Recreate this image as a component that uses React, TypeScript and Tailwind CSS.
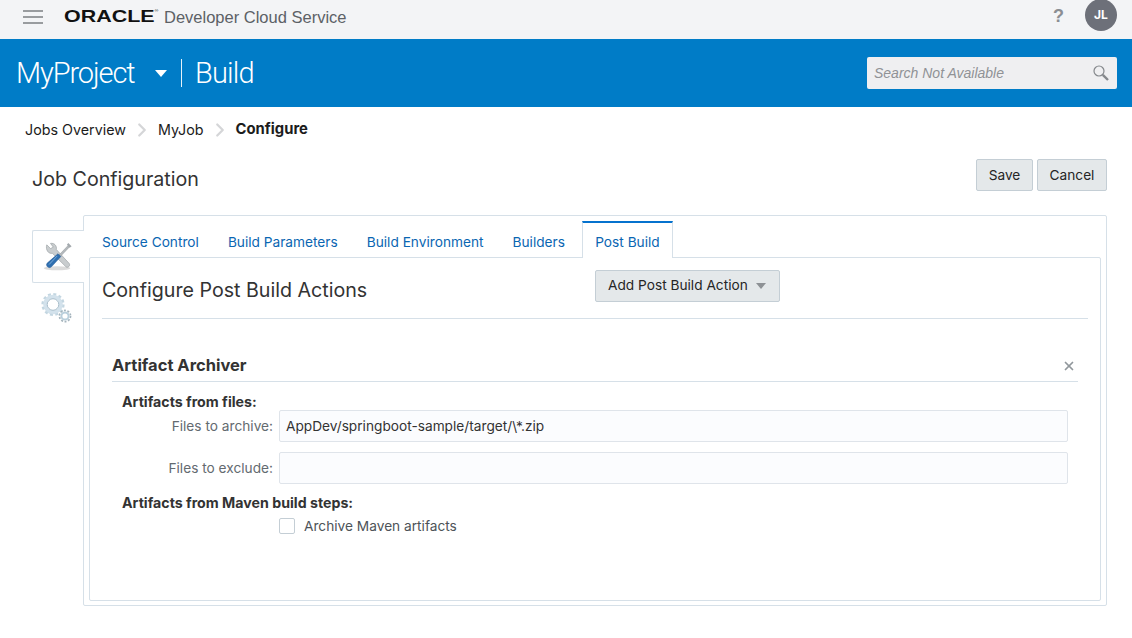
import React from 'react';
import { ChevronRight, X } from 'lucide-react';

const ToolsIcon = () => (
  <svg width="30" height="30" viewBox="0 0 32 32">
    <ellipse cx="15" cy="28" rx="14" ry="2.2" fill="#d2d2d2" opacity="0.8" />
    {/* wrench */}
    <path d="M4 3 L8 7 L11 5.5 L8 1.5 C12 0.8 15 4 14.2 8 L28 23 C29.5 25.5 26.5 28 24.5 26.5 L10 12 C6 13 2.5 8.5 4 3 Z" fill="#c9cdcf" stroke="#9aa0a4" strokeWidth="0.7" />
    {/* screwdriver shaft */}
    <path d="M27 3.5 L28.5 5 L17 17 L15.5 15.5 Z" fill="#b5babd" stroke="#8c9296" strokeWidth="0.5" />
    <path d="M27 1 L30.5 4.5 L28.5 6.2 L25.5 3 Z" fill="#a3a9ad" />
    {/* blue handle */}
    <path d="M16 12.5 L19 15.5 L9 26.5 C6.5 29 2 25.5 4.5 22.5 Z" fill="#2f6fb0" stroke="#1f5490" strokeWidth="0.5" />
    <path d="M15 15 L6.5 24" stroke="#7fb0dc" strokeWidth="1" />
  </svg>
);

const GearsIcon = () => (
  <svg width="32" height="32" viewBox="0 0 32 32" fill="none">
    <circle cx="12" cy="12.5" r="8" stroke="#d3e2ec" strokeWidth="3.6" />
    <circle cx="12" cy="12.5" r="10.5" stroke="#c3d6e1" strokeWidth="2.2" strokeDasharray="3 2.5" />
    <circle cx="12" cy="12.5" r="5.8" stroke="#8ea9bb" strokeWidth="0.8" />
    <circle cx="24" cy="24" r="3.6" stroke="#b9cfdc" strokeWidth="2" fill="#fff" />
    <circle cx="24" cy="24" r="5.6" stroke="#a5b4bd" strokeWidth="1.6" strokeDasharray="2 1.52" />
  </svg>
);

const SearchGlyph = () => (
  <svg width="18" height="18" viewBox="0 0 18 18" fill="none" className="ml-auto">
    <circle cx="7" cy="7" r="5" stroke="#85888c" strokeWidth="1.2" />
    <path d="M10.8 10.8 L16 16" stroke="#85888c" strokeWidth="2.4" />
  </svg>
);

const tabs = ['Source Control', 'Build Parameters', 'Build Environment', 'Builders'];

export default function App() {
  return (
    <div className='w-[1132px] h-[638px] overflow-hidden bg-white text-[13.7px] text-[#252525] font-["Inter","Liberation_Sans",sans-serif]'>
      {/* Top bar */}
      <header className="h-[39px] bg-[#f3f4f6] flex items-center pl-[23px] pr-[15px]">
        <div className="w-[20px] flex flex-col gap-[4px] mr-[21px] -mt-[5px]">
          <span className="h-[2px] bg-[#999c9f]" />
          <span className="h-[2px] bg-[#999c9f]" />
          <span className="h-[2px] bg-[#999c9f]" />
        </div>
        <span className='relative -mt-[6px] font-["Liberation_Sans",sans-serif] font-bold text-[16.5px] text-[#111] w-[93px] scale-x-[1.3] origin-left leading-none whitespace-nowrap'>ORACLE<span className="absolute top-[1px] text-[4px] font-normal">®</span></span>
        <span className='ml-[7px] -mt-[5px] font-["Liberation_Sans",sans-serif] text-[16.5px] text-[#5c6166] whitespace-nowrap'>Developer Cloud Service</span>
        <span className='ml-auto mr-[21px] -mt-[6px] font-["Liberation_Sans",sans-serif] font-bold text-[18px] text-[#8b8e93]'>?</span>
        <div className="w-[32px] h-[32px] -mt-[9px] rounded-full bg-[#6d7079] text-white text-[12px] font-bold flex items-center justify-center">JL</div>
      </header>

      {/* Blue band */}
      <div className="h-[68px] bg-[#007cc7] flex items-center pl-[16px] pr-[15px] text-white">
        <span className='font-["Roboto",sans-serif] text-[29px] font-light tracking-[-1.1px] leading-none whitespace-nowrap w-[119px]'>MyProject</span>
        <span className="ml-[20px] w-0 h-0 border-x-[6px] border-x-transparent border-t-[7px] border-t-white" />
        <span className="ml-[14px] w-px h-[28px] bg-white/90" />
        <span className='ml-[13px] font-["Roboto",sans-serif] font-light text-[29px] tracking-[-0.8px] leading-none'>Build</span>
        <div className="ml-auto w-[250px] h-[32px] bg-[#efeff1] rounded-[2px] flex items-center pl-[7px] pr-[7px]">
          <span className='font-["Liberation_Sans",sans-serif] italic text-[14px] text-[#909296]'>Search Not Available</span>
          <SearchGlyph />
        </div>
      </div>

      {/* Breadcrumbs */}
      <nav className="h-[45px] flex items-center pl-[25px] text-[14.3px] text-[#1c1c1c]">
        <span>Jobs Overview</span>
        <ChevronRight className="mx-[5px] w-[22px] h-[22px] text-[#d5d6d8]" strokeWidth={2.5} />
        <span>MyJob</span>
        <ChevronRight className="mx-[5px] w-[22px] h-[22px] text-[#d5d6d8]" strokeWidth={2.5} />
        <span className="font-bold text-[14.8px]">Configure</span>
      </nav>

      {/* Title row */}
      <div className="h-[63px] pt-[7px] pl-[32px] pr-[25px] flex items-start">
        <h1 className="mt-[6px] text-[19.65px] font-normal text-[#333]">Job Configuration</h1>
        <div className="ml-auto flex gap-[4px]">
          <button className="h-[32px] w-[57px] bg-[#e4e8ea] border border-[#c4ced5] rounded-[2px]">Save</button>
          <button className="h-[32px] w-[70px] bg-[#e4e8ea] border border-[#c4ced5] rounded-[2px]">Cancel</button>
        </div>
      </div>

      <div className="flex items-start pl-[32px]">
        {/* Side tabs */}
        <div className="mt-[15px] w-[51px] shrink-0">
          <div className="h-[53px] w-[52px] relative z-10 bg-white border border-r-0 border-[#d6e0e8] rounded-l-[2px] flex items-center justify-center pt-[1px] pr-[2px]">
            <ToolsIcon />
          </div>
          <div className="mt-[9px] flex justify-center pr-[1px]">
            <GearsIcon />
          </div>
        </div>

        {/* Outer panel */}
        <div className="w-[1024px] h-[391px] border border-[#d6e0e8] rounded-[2px] px-[5px] pb-[4px] flex flex-col">
          <div className="h-[41px] flex items-end pl-[13px] text-[#0a66b2]">
            {tabs.map((t) => (
              <span key={t} className="h-[37px] flex items-center mr-[29px] -mb-[1px] pt-[5px] whitespace-nowrap">{t}</span>
            ))}
            <span className="relative z-10 -ml-[12px] h-[37px] w-[91px] -mb-px flex items-center justify-center bg-white border-x border-[#d6e0e8] border-t-2 border-t-[#0572ce] pt-[3px] whitespace-nowrap">Post Build</span>
          </div>

          {/* Inner panel */}
          <div className="flex-1 border border-[#d6e0e8] rounded-[2px] px-[12px]">
            <div className="h-[61px] border-b border-[#d6e0e8] flex items-start">
              <h2 className="mt-[17px] text-[19.65px] font-normal text-[#333] leading-[30px] w-[493px] whitespace-nowrap">Configure Post Build Actions</h2>
              <button className="mt-[12px] h-[32px] w-[185px] bg-[#e4e8ea] border border-[#c4ced5] rounded-[2px] flex items-center pl-[12px] pb-[1px] whitespace-nowrap">
                Add Post Build Action
                <span className="ml-[8px] w-0 h-0 border-x-[5px] border-x-transparent border-t-[6px] border-t-[#8d9195]" />
              </button>
            </div>

            {/* Artifact Archiver */}
            <div className="mx-[10px] mt-[24px]">
              <div className="h-[39px] border-b border-[#d6e0e8] flex items-center pt-[7px] pr-[2px]">
                <h3 className="text-[16.5px] font-bold text-[#333]">Artifact Archiver</h3>
                <X className="ml-auto w-[14px] h-[14px] text-[#91979c]" strokeWidth={3} />
              </div>
              <div className="pl-[10px] pr-[10px] pt-[11px]">
                <div className="font-bold text-[14.2px] text-[#333] leading-[18px]">Artifacts from files:</div>
                <div className="flex items-center mt-[-1px] h-[32px]">
                  <label className="w-[151px] text-right text-[#636a70] whitespace-nowrap">Files to archive:</label>
                  <div className="ml-[6px] flex-1 h-[32px] bg-[#fbfcfe] border border-[#dfe4ea] rounded-[2px] flex items-center px-[6px] text-[#333]">AppDev/springboot-sample/target/\*.zip</div>
                </div>
                <div className="flex items-center mt-[10px] h-[32px]">
                  <label className="w-[151px] text-right text-[#636a70] whitespace-nowrap">Files to exclude:</label>
                  <div className="ml-[6px] flex-1 h-[32px] bg-[#fbfcfe] border border-[#dfe4ea] rounded-[2px]" />
                </div>
                <div className="mt-[10px] font-bold text-[14.2px] text-[#333] leading-[18px]">Artifacts from Maven build steps:</div>
                <div className="mt-[4px] ml-[157px] flex items-center h-[20px]">
                  <span className="w-[16px] h-[16px] bg-white border border-[#c4ced5] rounded-[2px]" />
                  <span className="ml-[9px] text-[#4d5358]">Archive Maven artifacts</span>
                </div>
              </div>
            </div>
          </div>
        </div>
      </div>
    </div>
  );
}
